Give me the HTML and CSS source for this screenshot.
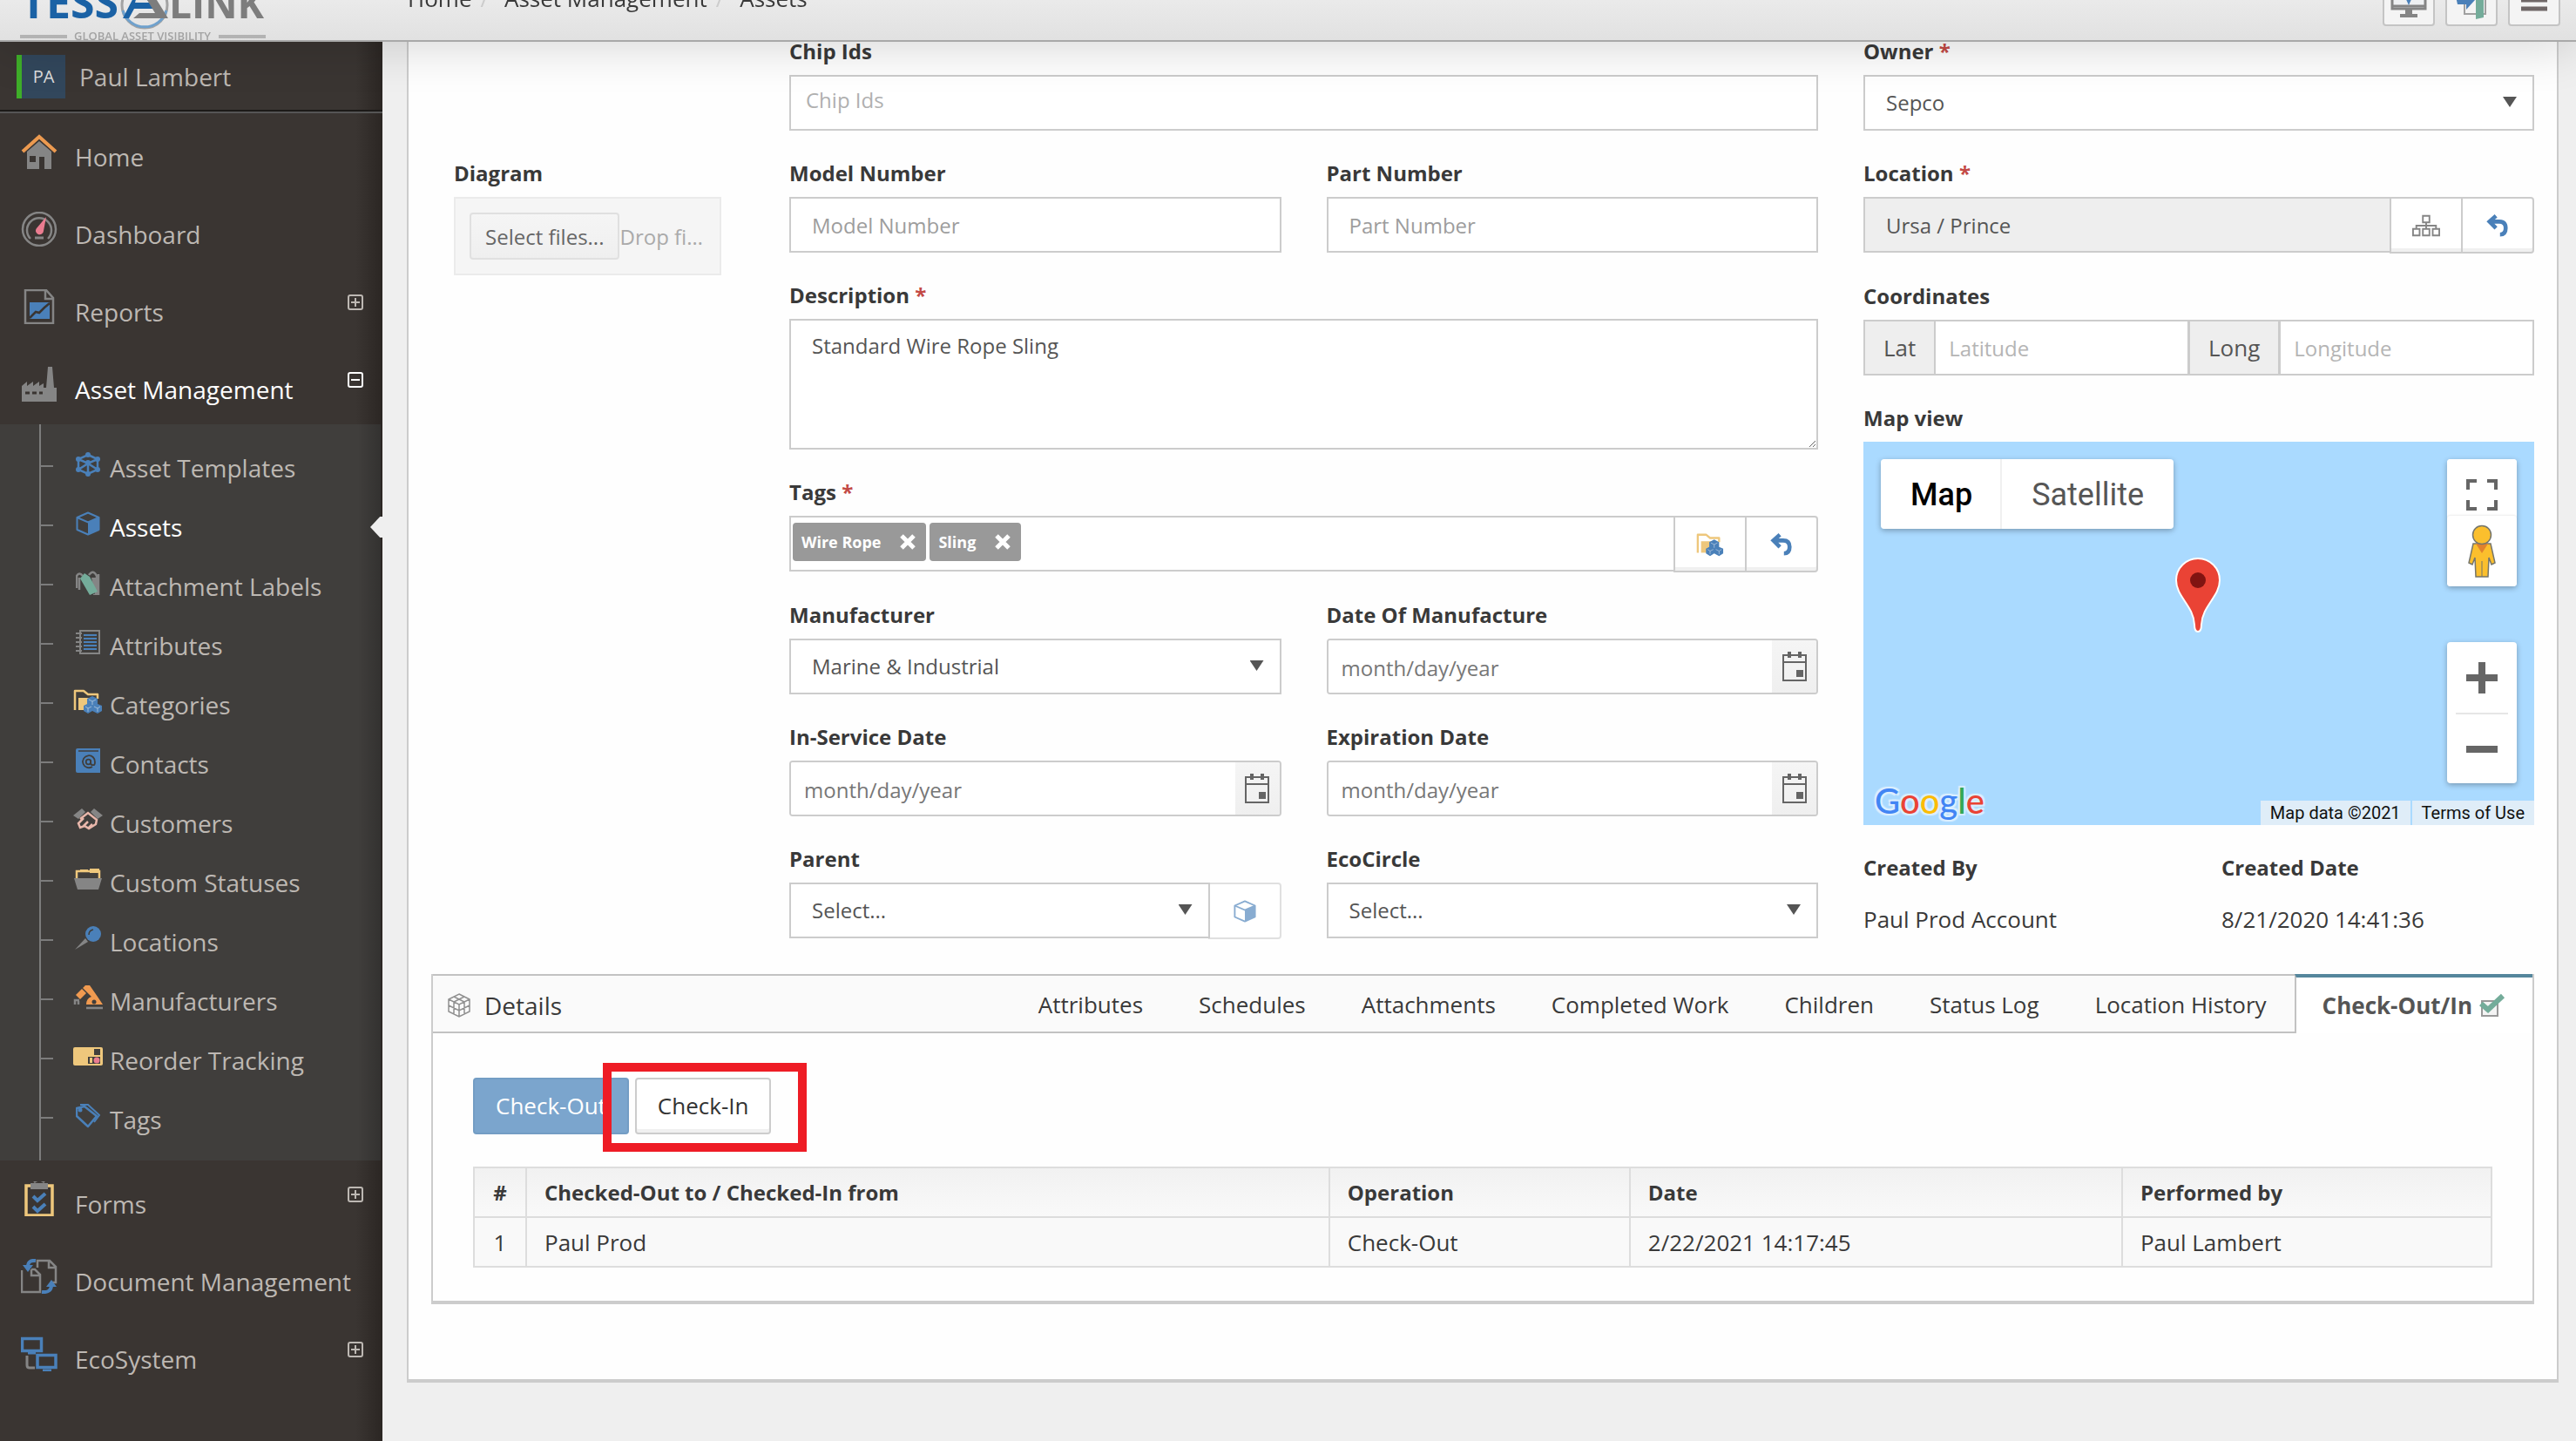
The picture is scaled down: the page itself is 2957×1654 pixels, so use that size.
FILE: index.html
```html
<!DOCTYPE html>
<html lang="en">
<head>
    <meta charset="UTF-8">
    <meta name="viewport" content="width=device-width, initial-scale=1.0">
    <title>Assets</title>
    <link rel="stylesheet" href="styles.css">
</head>
<body>

<!-- shared icons -->
<svg class="sprite" aria-hidden="true">
    <symbol id="i-cube" viewBox="0 0 28 28">
        <path d="M14 1.500 26.500 7v14L14 26.500 1.500 21V7z" fill="none" stroke="currentColor" stroke-width="2" stroke-linejoin="round"/>
        <path d="M1.500 7 14 12.500 26.500 7" fill="none" stroke="currentColor" stroke-width="2"/>
        <path d="M14 12.500 26.500 7v14L14 26.500z" fill="currentColor"/>
    </symbol>
    <symbol id="i-undo" viewBox="0 0 28 28">
        <path d="M12 2 4 9l8 8M5 9h11q8 0 8 8 0 8-7 8" fill="none" stroke="#4a80b9" stroke-width="5"/>
    </symbol>
    <symbol id="i-calendar" viewBox="0 0 28 34">
        <path d="M1 4h26v29H1zM1 12h26" fill="none" stroke="#656565" stroke-width="2"/>
        <path d="M6 0h4v7H6zM18 0h4v7h-4zM16 21h8v8h-8z" fill="#656565"/>
    </symbol>
    <symbol id="i-folder" viewBox="0 0 34 28">
        <path d="M2 24V2h10l5 4h11v5" fill="none" stroke="#eec77c" stroke-width="2.500" stroke-linejoin="round"/>
        <path d="M6 10h17v14H6z" fill="#eec77c"/>
        <path d="m22 8 6 3v6l5 2v6l-5 3-6-3-5 3-5-3v-6l4-2v-6z" fill="#4a80b9"/>
        <path d="m18 12 4 2 4-2M22 14v4M14 20l3 2 4-2M17 22v4M24 20l4 2 3-2M28 22v4" fill="none" stroke="#c3d5e6" stroke-opacity=".7"/>
    </symbol>
    <symbol id="i-plus" viewBox="0 0 18 18">
        <rect x="1" y="1" width="16" height="16" rx="2" fill="none" stroke="currentColor" stroke-width="2"/>
        <path d="M4 9h10M9 4v10" stroke="currentColor" stroke-width="2"/>
    </symbol>
    <symbol id="i-minus" viewBox="0 0 18 18">
        <rect x="1" y="1" width="16" height="16" rx="2" fill="none" stroke="currentColor" stroke-width="2"/>
        <path d="M4 9h10" stroke="currentColor" stroke-width="2"/>
    </symbol>
    <symbol id="i-x" viewBox="0 0 18 18">
        <path d="m2 2 14 14M16 2 2 16" stroke="#fff" stroke-width="5"/>
    </symbol>
</svg>

<header class="header">
    <a href="#" class="logo" aria-label="TessaLink">
        <svg width="290" height="62" viewBox="0 -16 290 62">
            <g font-family="Open Sans, sans-serif" font-weight="700">
                <text x="1" y="21" font-size="50" fill="#1b62a5">TESS</text>
                <text x="171" y="21" font-size="46" fill="#7d7d7d">LINK</text>
            </g>
            <circle cx="143" cy="6" r="26" fill="none" stroke="#a3a3a3" stroke-width="3"/>
            <path d="M118 12a26 26 0 0 0 50 0" fill="none" stroke="#6fa1cd" stroke-width="3"/>
            <path d="M118 21 136-14h12l5 24h-22l-6 11z" fill="#1b62a5"/>
            <path d="M134-4h8l7 7h-17z" fill="#e6e6e6"/>
            <path d="M130 21h40L147-16l-7 6 15 25h-18z" fill="#7d7d7d"/>
            <path d="M0 42h54M228 42h54" stroke="#b3b3b3" stroke-width="4"/>
            <text x="62" y="46" font-family="Open Sans, sans-serif" font-size="13" font-weight="600" fill="#a3a3a3">GLOBAL ASSET VISIBILITY</text>
        </svg>
    </a>
    <nav class="breadcrumb">
        <a href="#">Home</a><span>/</span><a href="#">Asset Management</a><span>/</span><a href="#">Assets</a>
    </nav>
    <div class="header-buttons">
        <button type="button" aria-label="Screen">
            <svg width="44" height="44" viewBox="0 0 44 44"><path d="M3 4h38v28H3z" fill="#eef0f2" stroke="#858585" stroke-width="3"/><path d="M3 29h38" stroke="#858585" stroke-width="3"/><path d="M18 19h8l-4 9z" fill="#4a80b9"/><path d="M18 32h8v6h6v4H12v-4h6z" fill="#858585"/></svg>
        </button>
        <button type="button" aria-label="Sign out">
            <svg width="44" height="44" viewBox="0 0 44 44"><path d="M14 26v12h24V6H14" fill="none" stroke="#a0a0a0" stroke-width="2"/><path d="M27 12l9-4v34l-9 2z" fill="#74ac9a"/><path d="M4 18h10v-7l12 11-10 11v-6H6z" fill="#4a80b9"/></svg>
        </button>
        <button type="button" aria-label="Menu">
            <svg width="30" height="28" viewBox="0 0 30 28"><path d="M0 4h30M0 14h30M0 24h30" stroke="#6f6767" stroke-width="5"/></svg>
        </button>
    </div>
</header>

<div class="layout">
    <aside class="sidebar">
        <div class="user">
            <span class="avatar">PA</span>
            <span>Paul Lambert</span>
        </div>
        <ul class="menu">
            <li><a href="#">
                <svg viewBox="0 0 42 40"><path d="M7 20 21 8l14 12v20h-8V26h-6v14H7z" fill="#858585"/><path d="M10 25h7v7h-7z" fill="#3a3532"/><path d="M2 20 21 3l19 17" fill="none" stroke="#ec9a50" stroke-width="4"/></svg>
                <span>Home</span></a></li>
            <li><a href="#">
                <svg viewBox="0 0 42 40"><circle cx="21" cy="20" r="19" fill="none" stroke="#858585" stroke-width="2.500"/><path d="M11 31a14 14 0 1 1 20 0" fill="none" stroke="#858585" stroke-width="2.500"/><path d="m29 6-3 16a4.500 4.500 0 1 1-8-3z" fill="#ea7c90"/><path d="M16 30h10" stroke="#858585" stroke-width="3"/></svg>
                <span>Dashboard</span></a></li>
            <li><a href="#">
                <svg viewBox="0 0 42 40"><path d="M5 1h24l8 9v29H5z" fill="none" stroke="#858585" stroke-width="2.500"/><path d="M28 1v10h9" fill="none" stroke="#858585" stroke-width="2.500"/><path d="M10 15h23v19H10z" fill="#4a80b9"/><path d="m10 33 7-7 4 1 6-6 6-5" fill="none" stroke="#3a3532" stroke-width="2.500"/></svg>
                <span>Reports</span>
                <svg class="toggle"><use href="#i-plus"/></svg></a></li>
            <li class="open"><a href="#">
                <svg viewBox="0 0 42 40"><path d="M1 40V22l6-5v5l7-5v5l7-5v5l5-3v5h3l2-24h5l2 24h3v16z" fill="#858585"/><path d="M5 30h5M13 30h5M21 30h4" stroke="#3a3532" stroke-width="3"/></svg>
                <span>Asset Management</span>
                <svg class="toggle"><use href="#i-minus"/></svg></a>
                <ul class="submenu">
                    <li><a href="#"><svg viewBox="0 0 28 28"><g stroke="#4a80b9" stroke-width="2.500" fill="none"><path d="M14 3 25 8v12l-11 5L3 20V8zM3 8l11 5 11-5M14 13v12M3 20l11-7 11 7"/></g><g fill="#4a80b9"><circle cx="14" cy="3" r="3"/><circle cx="25" cy="8" r="3"/><circle cx="25" cy="20" r="3"/><circle cx="14" cy="25" r="3"/><circle cx="3" cy="20" r="3"/><circle cx="3" cy="8" r="3"/><circle cx="14" cy="12" r="3"/></g></svg>Asset Templates</a></li>
                    <li class="active"><a href="#"><svg class="blue"><use href="#i-cube"/></svg>Assets</a></li>
                    <li><a href="#"><svg viewBox="0 0 28 28"><path d="M1 20V6q3-5 7 0M4 22V8M15 5q5-7 9 1v4M26 4v24h-6" fill="none" stroke="#858585" stroke-width="2.500"/><path d="M18 8h9v19h-5z" fill="#858585"/><path d="m5 9 5-6 6 4 9 17-9 4z" fill="#74ac9a"/></svg>Attachment Labels</a></li>
                    <li><a href="#"><svg viewBox="0 0 28 28"><path d="M5 1h22v26H5z" fill="none" stroke="#858585" stroke-width="2"/><path d="M0 4h7M0 9h7M0 14h7M0 19h7M0 24h7" stroke="#858585" stroke-width="2"/><path d="M9 6h15M9 10h15M9 14h15M9 18h15M9 22h15" stroke="#4a80b9" stroke-width="2"/></svg>Attributes</a></li>
                    <li><a href="#"><svg class="wide"><use href="#i-folder"/></svg>Categories</a></li>
                    <li><a href="#"><svg viewBox="0 0 28 28"><path d="M2 0h26v28H2q-2 0-2-2V2q0-2 2-2z" fill="#4a80b9"/><path d="M3 3h23" stroke="#403e3c" stroke-width="1.500"/><path d="M19 21a7 7 0 1 1 3-5q0 4-3 3-2 0-2-3v-3" fill="none" stroke="#403e3c" stroke-width="1.800"/><circle cx="14.500" cy="15.500" r="2.800" fill="none" stroke="#403e3c" stroke-width="1.800"/></svg>Contacts</a></li>
                    <li><a href="#"><svg class="wide" viewBox="0 0 34 28"><path d="m0 9 10-8 4 4-8 8zM34 9 24 1l-4 4 8 8z" fill="#858585"/><path d="m8 13 9-7 10 8-1 5-8 5-5-3-5 2-2-5 6-6M12 21l5-5M17 24l5-5" fill="none" stroke="#e9b7ab" stroke-width="2.500"/></svg>Customers</a></li>
                    <li><a href="#"><svg class="wide" viewBox="0 0 34 28"><path d="M4 13V5h26v8" fill="none" stroke="#eec77c" stroke-width="2.500"/><path d="M8 3h9v3H8zM19 2h11v5H19z" fill="#eec77c"/><path d="M1 13h32l-4 13H5z" fill="#858585"/></svg>Custom Statuses</a></li>
                    <li><a href="#"><svg class="wide" viewBox="0 0 34 28"><path d="m2 27 12-13 3 4z" fill="#858585"/><circle cx="23" cy="9" r="9" fill="#4a80b9"/><path d="M18 10q0-5 5-6" fill="none" stroke="#403e3c" stroke-width="1.500"/></svg>Locations</a></li>
                    <li><a href="#"><svg class="wide" viewBox="0 0 34 28"><path d="m3 11 7-7 5 5-7 7z" fill="#f09a50"/><path d="m11 3 3-3h5l9 13 6 9H15q0-7 6-9z" fill="#f09a50"/><circle cx="24" cy="19" r="2.500" fill="#403e3c"/><path d="M15 26h19" stroke="#858585" stroke-width="2.500"/><path d="M7 17H2v5M6 18v4" fill="none" stroke="#858585" stroke-width="2.500"/></svg>Manufacturers</a></li>
                    <li><a href="#"><svg class="wide" viewBox="0 0 34 28"><rect y="3" width="34" height="21" rx="2" fill="#eec77c"/><path d="M24 5h7v7h-7zM17 14h14v8H17z" fill="#403e3c"/><circle cx="27" cy="18" r="3.500" fill="#ea7c90"/><path d="M19 15h3v6h-3z" fill="#eec77c"/></svg>Reorder Tracking</a></li>
                    <li><a href="#"><svg viewBox="0 0 28 28"><path d="M1 14V5l9-2 14 11-10 12z" fill="none" stroke="#4a80b9" stroke-width="2.500" stroke-linejoin="round"/><path d="M5 1h9l13 12-6 8" fill="none" stroke="#4a80b9" stroke-width="2"/><circle cx="5" cy="7" r="2.500" fill="#4a80b9"/></svg>Tags</a></li>
                </ul>
            </li>
            <li><a href="#">
                <svg viewBox="0 0 42 40"><path d="M6 5h30v34H6z" fill="none" stroke="#eec77c" stroke-width="3.500"/><path d="M11 2h20v7H11z" fill="#858585"/><path d="M15 1q6-5 12 0" fill="none" stroke="#858585" stroke-width="2.500"/><path d="m14 17 5 5 9-8M14 29l5 5 9-8" fill="none" stroke="#4a80b9" stroke-width="4"/></svg>
                <span>Forms</span>
                <svg class="toggle"><use href="#i-plus"/></svg></a></li>
            <li><a href="#">
                <svg viewBox="0 0 42 40"><path d="M1 13v25h21V18l-6-6h-4M12 12v7h9M19 10V2h14l7 7v18h-6M32 2v8h8" fill="none" stroke="#858585" stroke-width="2.500"/><path d="M17 2q-9-1-9 7M24 38q11 1 11-8" fill="none" stroke="#4a80b9" stroke-width="4"/><path d="M2 7h12l-6 8zM29 32h12l-6-8z" fill="#4a80b9"/></svg>
                <span>Document Management</span></a></li>
            <li><a href="#">
                <svg viewBox="0 0 42 40"><path d="M1.500 2.500h22v14h-22zM19 21.500h21v14H19z" fill="none" stroke="#4a80b9" stroke-width="3.500"/><path d="M8 19h9M25 39h10" stroke="#4a80b9" stroke-width="3"/><path d="M7 22v11q0 3 3 3h6" fill="none" stroke="#858585" stroke-width="3"/></svg>
                <span>EcoSystem</span>
                <svg class="toggle"><use href="#i-plus"/></svg></a></li>
        </ul>
    </aside>

    <main class="main">
        <div class="panel">
            <form class="asset-form">
                <div class="col-diagram">
                    <div class="field">
                        <label for="diagram">Diagram</label>
                        <div class="upload">
                            <button type="button" id="diagram">Select files...</button>
                            <span>Drop files here to upload</span>
                        </div>
                    </div>
                </div>

                <div class="col-fields">
                    <div class="field full">
                        <label for="chips">Chip Ids</label>
                        <input type="text" id="chips" class="control chip-input" placeholder="Chip Ids">
                    </div>
                    <div class="field">
                        <label for="model">Model Number</label>
                        <input type="text" id="model" class="control" placeholder="Model Number">
                    </div>
                    <div class="field">
                        <label for="part">Part Number</label>
                        <input type="text" id="part" class="control" placeholder="Part Number">
                    </div>
                    <div class="field full">
                        <label for="description">Description <em>*</em></label>
                        <textarea id="description" class="control">Standard Wire Rope Sling</textarea>
                    </div>
                    <div class="field full">
                        <label for="tags">Tags <em>*</em></label>
                        <div class="group">
                            <div class="control tag-box">
                                <span class="tag">Wire Rope <button type="button" aria-label="Remove Wire Rope"><svg><use href="#i-x"/></svg></button></span>
                                <span class="tag">Sling <button type="button" aria-label="Remove Sling"><svg><use href="#i-x"/></svg></button></span>
                                <input type="text" id="tags">
                            </div>
                            <button type="button" class="addon" aria-label="Choose tags"><svg class="wide"><use href="#i-folder"/></svg></button>
                            <button type="button" class="addon last" aria-label="Undo"><svg><use href="#i-undo"/></svg></button>
                        </div>
                    </div>
                    <div class="field">
                        <label for="manufacturer">Manufacturer</label>
                        <div class="select"><select id="manufacturer" class="control"><option>Marine &amp; Industrial</option></select></div>
                    </div>
                    <div class="field">
                        <label for="made">Date Of Manufacture</label>
                        <div class="date">
                            <input type="text" id="made" placeholder="month/day/year">
                            <button type="button" aria-label="Open calendar"><svg><use href="#i-calendar"/></svg></button>
                        </div>
                    </div>
                    <div class="field">
                        <label for="service">In-Service Date</label>
                        <div class="date">
                            <input type="text" id="service" placeholder="month/day/year">
                            <button type="button" aria-label="Open calendar"><svg><use href="#i-calendar"/></svg></button>
                        </div>
                    </div>
                    <div class="field">
                        <label for="expiration">Expiration Date</label>
                        <div class="date">
                            <input type="text" id="expiration" placeholder="month/day/year">
                            <button type="button" aria-label="Open calendar"><svg><use href="#i-calendar"/></svg></button>
                        </div>
                    </div>
                    <div class="field">
                        <label for="parent">Parent</label>
                        <div class="group">
                            <div class="select"><select id="parent" class="control"><option>Select...</option></select></div>
                            <button type="button" class="addon last" disabled aria-label="Open parent"><svg class="blue"><use href="#i-cube"/></svg></button>
                        </div>
                    </div>
                    <div class="field">
                        <label for="circle">EcoCircle</label>
                        <div class="select"><select id="circle" class="control"><option>Select...</option></select></div>
                    </div>
                </div>

                <div class="col-side">
                    <div class="field full">
                        <label for="owner">Owner <em>*</em></label>
                        <div class="select"><select id="owner" class="control"><option>Sepco</option></select></div>
                    </div>
                    <div class="field full">
                        <label for="location">Location <em>*</em></label>
                        <div class="group">
                            <input type="text" id="location" class="control" value="Ursa / Prince" readonly>
                            <button type="button" class="addon" aria-label="Choose location">
                                <svg class="wide" viewBox="0 0 34 26"><g fill="none" stroke="#858585" stroke-width="2"><path d="M13 1h8v8h-8zM1 17h8v8H1zM13 17h8v8h-8zM25 17h8v8h-8zM17 9v8M5 17v-4h24v4"/></g></svg>
                            </button>
                            <button type="button" class="addon last" aria-label="Undo"><svg><use href="#i-undo"/></svg></button>
                        </div>
                    </div>
                    <div class="field full">
                        <label for="lat">Coordinates</label>
                        <div class="group coords">
                            <label for="lat">Lat</label><input type="text" id="lat" placeholder="Latitude">
                            <label for="long">Long</label><input type="text" id="long" placeholder="Longitude">
                        </div>
                    </div>
                    <div class="field full">
                        <h4>Map view</h4>
                        <div class="map">
                            <div class="map-type">
                                <button type="button" class="on">Map</button><button type="button">Satellite</button>
                            </div>
                            <svg class="pin" width="54" height="88" viewBox="0 0 54 88"><path d="M27 86q-4 0-4-8C22 56 2 46 2 27a25 25 0 0 1 50 0c0 19-20 29-21 51q0 8-4 8z" fill="#ea4335" stroke="#fff" stroke-width="2"/><circle cx="27" cy="27" r="9" fill="#811411"/></svg>
                            <div class="map-tools">
                                <button type="button" aria-label="Full screen"><svg width="36" height="36" viewBox="0 0 36 36"><path d="M12 2H2v10M24 2h10v10M2 24v10h10M34 24v10H24" fill="none" stroke="#666" stroke-width="4"/></svg></button>
                                <button type="button" class="pegman" aria-label="Street view"><svg width="36" height="62" viewBox="0 0 36 62"><path d="M8 22h20l5 22-4 2-3-8-1 22H11l-1-22-3 8-4-2z" fill="#fbbf2d" stroke="#75756b" stroke-width="1.500"/><path d="M18 42v18" stroke="#75756b"/><path d="M11 22h14l-7 11z" fill="#e1822c"/><circle cx="18" cy="12" r="10.500" fill="#fbbf2d" stroke="#75756b" stroke-width="1.500"/></svg></button>
                            </div>
                            <div class="map-zoom">
                                <button type="button" aria-label="Zoom in"><svg width="36" height="36" viewBox="0 0 36 36"><path d="M0 18h36M18 0v36" stroke="#666" stroke-width="8"/></svg></button>
                                <button type="button" aria-label="Zoom out"><svg width="36" height="36" viewBox="0 0 36 36"><path d="M0 18h36" stroke="#666" stroke-width="8"/></svg></button>
                            </div>
                            <a href="#" class="google"><span class="b">G</span><span class="r">o</span><span class="y">o</span><span class="b">g</span><span class="g">l</span><span class="r">e</span></a>
                            <div class="map-credit"><span>Map data ©2021</span><a href="#">Terms of Use</a></div>
                        </div>
                    </div>
                    <div class="field">
                        <h4>Created By</h4>
                        <p>Paul Prod Account</p>
                    </div>
                    <div class="field">
                        <h4>Created Date</h4>
                        <p>8/21/2020 14:41:36</p>
                    </div>
                </div>
            </form>

            <section class="details">
                <div class="details-head">
                    <h3>
                        <svg width="26" height="28" viewBox="0 0 26 28"><g fill="none" stroke="#909090" stroke-width="1.500"><path d="m13 1 12 6v14l-12 6-12-6V7zM1 7l12 6 12-6M13 13v14M7 4l12 6v14M19 4 7 10v14M1 14l12 6 12-6"/></g></svg>
                        Details
                    </h3>
                    <nav class="tabs">
                        <a href="#">Attributes</a>
                        <a href="#">Schedules</a>
                        <a href="#">Attachments</a>
                        <a href="#">Completed Work</a>
                        <a href="#">Children</a>
                        <a href="#">Status Log</a>
                        <a href="#">Location History</a>
                        <a href="#" class="active">Check-Out/In
                            <svg width="30" height="28" viewBox="0 0 30 28"><path d="M3 9h18v17H3z" fill="#f4f4f4" stroke="#999" stroke-width="2"/><path d="m2 12 8 7L27 3" fill="none" stroke="#74ac9a" stroke-width="6"/></svg>
                        </a>
                    </nav>
                </div>
                <div class="details-body">
                    <div class="actions">
                        <button type="button" class="btn btn-primary">Check-Out</button>
                        <div class="highlight"><button type="button" class="btn">Check-In</button></div>
                    </div>
                    <table class="log">
                        <thead>
                            <tr>
                                <th class="num">#</th>
                                <th class="who">Checked-Out to / Checked-In from</th>
                                <th class="op">Operation</th>
                                <th class="when">Date</th>
                                <th>Performed by</th>
                            </tr>
                        </thead>
                        <tbody>
                            <tr>
                                <td class="num">1</td>
                                <td>Paul Prod</td>
                                <td>Check-Out</td>
                                <td>2/22/2021 14:17:45</td>
                                <td>Paul Lambert</td>
                            </tr>
                        </tbody>
                    </table>
                </div>
            </section>
        </div>
    </main>
</div>

</body>
</html>
```

FILE: styles.css
```css
* {
    box-sizing: border-box;
}
body {
    margin: 0;
    font-family: "Open Sans", sans-serif;
    font-size: 26px;
    color: #393939;
    background: #efefef;
}
a {
    color: inherit;
    text-decoration: none;
}
button, input, select, textarea {
    font-family: inherit;
    font-size: 24px;
    color: inherit;
    margin: 0;
}
button {
    cursor: pointer;
    padding: 0;
}
ul {
    list-style: none;
    margin: 0;
    padding: 0;
}
.sprite {
    display: none;
}
.blue {
    color: #4a80b9;
}

/* header */
.header {
    position: fixed;
    top: 0;
    left: 0;
    right: 0;
    z-index: 10;
    height: 48px;
    display: flex;
    align-items: flex-end;
    overflow: hidden;
    background: linear-gradient(#eaeaea, #e1e1e1);
    border-bottom: 2px solid #a9a9a9;
    box-shadow: 0 0 60px rgba(0, 0, 0, 0.2);
}
.logo {
    width: 446px;
    padding-left: 23px;
}
.logo svg {
    display: block;
}
.breadcrumb {
    flex: 1;
    padding-left: 22px;
    line-height: 36px;
    margin-bottom: 30px;
}
.breadcrumb span {
    color: #ccc;
    padding: 0 18px 0 10px;
}
.header-buttons {
    display: flex;
    gap: 12px;
    padding-right: 18px;
    margin-bottom: 16px;
}
.header-buttons button {
    width: 60px;
    height: 60px;
    display: flex;
    align-items: center;
    justify-content: center;
    background: #f4f4f4;
    border: 2px solid #c4c4c4;
    border-radius: 4px;
}

.layout {
    display: flex;
    min-height: 100vh;
}

/* sidebar */
.sidebar {
    width: 439px;
    flex-shrink: 0;
    padding-top: 48px;
    background: linear-gradient(to right, transparent 93%, #2b2623), #3a3532;
    color: #bdb8b3;
    font-size: 28px;
}
.user {
    display: flex;
    align-items: center;
    gap: 16px;
    height: 82px;
    padding: 0 20px 0 19px;
    border-bottom: 2px solid #555;
    box-shadow: inset 0 -2px #1c1a18;
}
.avatar {
    width: 56px;
    height: 50px;
    border-left: 6px solid #3fae29;
    background: #32475c;
    color: #ddd;
    font-size: 20px;
    line-height: 50px;
    text-align: center;
}
.menu > li > a {
    display: flex;
    gap: 20px;
    padding: 24px 22px 13px 24px;
    line-height: 52px;
}
.menu > li > a svg {
    width: 42px;
    height: 40px;
    flex-shrink: 0;
}
.menu > li > a span {
    flex: 1;
    white-space: nowrap;
}
.menu > li > a .toggle {
    width: 18px;
    height: 18px;
    margin-top: 6px;
}
.menu > .open > a {
    color: #fff;
    padding-bottom: 14px;
}
.submenu {
    position: relative;
    margin-right: 2px;
    padding: 16px 0 13px;
    background: linear-gradient(to right, transparent 94%, rgba(0, 0, 0, 0.2)), #403e3c;
}
.submenu::before {
    content: "";
    position: absolute;
    top: 0;
    bottom: 0;
    left: 45px;
    width: 2px;
    background: #7c7c7c;
}
.submenu li {
    position: relative;
}
.submenu li::before {
    content: "";
    position: absolute;
    left: 47px;
    top: 31px;
    width: 14px;
    height: 2px;
    background: #7c7c7c;
}
.submenu a {
    display: flex;
    align-items: center;
    gap: 11px;
    height: 68px;
    padding-left: 87px;
}
.submenu svg {
    width: 28px;
    height: 28px;
    margin-bottom: 8px;
}
.submenu svg.wide {
    width: 34px;
    margin-left: -3px;
    margin-right: -3px;
}
.submenu .active a {
    color: #fff;
}
.submenu .active::after {
    content: "";
    position: absolute;
    right: -2px;
    top: 22px;
    width: 14px;
    height: 24px;
    background: #efefef;
    clip-path: polygon(0 50%, 80% 0, 100% 0, 100% 100%, 80% 100%);
}

/* main panel */
.main {
    flex: 1;
    min-width: 0;
    padding: 0 20px 68px 28px;
}
.panel {
    padding: 46px 26px 86px;
    background: #fefefe;
    border: 2px solid #ccc;
    border-width: 0 2px 4px;
}
.asset-form {
    display: grid;
    grid-template-columns: 333fr 1181fr 770fr;
    gap: 52px;
    padding-left: 26px;
}
.col-diagram {
    padding-top: 140px;
    padding-right: 26px;
    min-width: 0;
}
.col-fields, .col-side {
    display: grid;
    grid-template-columns: 1fr 1fr;
    align-content: start;
    gap: 36px 52px;
    min-width: 0;
}
.field {
    min-width: 0;
}
.full {
    grid-column: span 2;
}
.field > label, .field > h4 {
    display: block;
    margin: 0 0 14px;
    font-size: 24px;
    font-weight: 700;
    line-height: 26px;
    color: #393939;
}
.field em {
    color: #c34a46;
    font-style: normal;
}
.field p {
    margin: 0;
    line-height: 64px;
}
.control {
    display: block;
    width: 100%;
    height: 64px;
    padding: 0 24px;
    border: 2px solid #ccc;
    border-radius: 0;
    background: #fff;
    color: #555;
}
.control[readonly] {
    background: #eee;
}
::placeholder {
    color: #9d9d9d;
    opacity: 1;
}
.chip-input {
    padding: 0 17px 8px;
}
.chip-input::placeholder {
    color: #b0b0b0;
}
textarea.control {
    height: 150px;
    padding-top: 11px;
    line-height: 36px;
    resize: vertical;
}
.select {
    position: relative;
    flex: 1;
}
.select select {
    appearance: none;
    padding-bottom: 2px;
}
.select::after {
    content: "";
    position: absolute;
    right: 20px;
    top: 25px;
    width: 16px;
    height: 12px;
    background: #555;
    clip-path: polygon(0 0, 100% 0, 50% 100%);
    pointer-events: none;
}
.group {
    display: flex;
    align-items: flex-start;
}
.addon {
    width: 84px;
    height: 65px;
    flex-shrink: 0;
    margin-left: -2px;
    display: flex;
    align-items: center;
    justify-content: center;
    background: #fff;
    border: 2px solid #ccc;
    box-shadow: inset 0 -4px #f0f0f0;
}
.addon.last {
    border-radius: 0 4px 4px 0;
}
.addon svg {
    width: 26px;
    height: 28px;
}
.addon svg.wide {
    width: 32px;
}
.addon:disabled {
    border-color: #e0e0e0;
    border-left-color: #ccc;
    box-shadow: none;
}
.addon:disabled svg {
    opacity: 0.65;
}
.tag-box {
    display: flex;
    gap: 4px;
    padding: 6px 2px;
    flex: 1;
}
.tag-box input {
    flex: 1;
    min-width: 0;
    border: 0;
    background: none;
}
.tag {
    display: flex;
    align-items: center;
    gap: 22px;
    height: 44px;
    padding: 0 12px 0 10px;
    border-radius: 4px;
    background: #999;
    color: #fff;
    font-size: 18px;
    font-weight: 700;
}
.tag button {
    border: 0;
    background: none;
}
.tag svg {
    display: block;
    width: 18px;
    height: 18px;
}
.date {
    display: flex;
    height: 64px;
    border: 2px solid #ccc;
    border-radius: 4px;
    background: #fff;
    overflow: hidden;
}
.date input {
    flex: 1;
    min-width: 0;
    border: 0;
    padding: 2px 15px 0;
}
.date input::placeholder {
    color: #777;
}
.date button {
    display: flex;
    align-items: center;
    justify-content: center;
    width: 51px;
    border: 0;
    background: linear-gradient(#f5f5f5, #efefef);
}
.date svg {
    width: 28px;
    height: 34px;
}
.upload {
    display: flex;
    align-items: center;
    height: 90px;
    padding: 0 16px;
    border: 2px solid #ebebeb;
    background: #f5f5f5;
    font-size: 24px;
    color: #aaa;
}
.upload button {
    height: 54px;
    padding: 0 16px;
    flex-shrink: 0;
    border: 2px solid #e0e0e0;
    border-radius: 4px;
    background: linear-gradient(#f5f5f5, #efefef);
    color: #666;
}
.upload span {
    overflow: hidden;
    white-space: nowrap;
    text-overflow: ellipsis;
}
.coords {
    height: 64px;
    align-items: stretch;
    border: 2px solid #ccc;
    background: #fff;
    color: #555;
}
.coords label {
    padding: 0 21px;
    line-height: 60px;
    background: #eee;
    border-right: 2px solid #ccc;
}
.coords input + label {
    border-left: 3px solid #ccc;
    border-right-width: 3px;
}
.coords input {
    flex: 1;
    min-width: 0;
    border: 0;
    padding: 0 15px;
}
.coords input::placeholder {
    color: #b5b5b5;
}

/* map */
.map {
    position: relative;
    height: 440px;
    background: #aadaff;
    font-family: Roboto, sans-serif;
}
.map button {
    display: flex;
    align-items: center;
    justify-content: center;
    border: 0;
    background: #fff;
}
.map-type {
    position: absolute;
    top: 20px;
    left: 20px;
    display: flex;
    border-radius: 4px;
    overflow: hidden;
    box-shadow: 0 2px 6px rgba(0, 0, 0, 0.3);
}
.map .map-type button {
    height: 80px;
    padding: 2px 34px 0;
    font-size: 36px;
    color: #565656;
}
.map .map-type .on {
    padding-right: 32px;
    color: #000;
    font-weight: 500;
    border-right: 2px solid #f0f0f0;
}
.pin {
    position: absolute;
    left: 50%;
    bottom: 50%;
    margin-left: -28px;
}
.map-tools, .map-zoom {
    position: absolute;
    right: 20px;
    width: 80px;
    display: flex;
    flex-direction: column;
    background: #fff;
    border-radius: 4px;
    box-shadow: 0 2px 6px rgba(0, 0, 0, 0.3);
}
.map-tools {
    top: 20px;
}
.map-zoom {
    bottom: 48px;
    padding: 0 10px;
}
.map-tools button, .map-zoom button {
    height: 81px;
    border-radius: 4px;
}
.map .map-zoom button + button {
    border-top: 2px solid #e6e6e6;
    border-radius: 0;
}
.map-tools .pegman {
    margin-top: -16px;
    box-shadow: 0 -1px 2px rgba(0, 0, 0, 0.08);
}
.google {
    position: absolute;
    left: 13px;
    bottom: 3px;
    font-family: Lato, sans-serif;
    font-size: 40px;
    font-weight: 500;
    line-height: 50px;
    text-shadow: 2px 2px 1px #dcefff, -2px -2px 1px #dcefff, 2px -2px 1px #dcefff, -2px 2px 1px #dcefff;
}
.google .b { color: #4285f4; }
.google .r { color: #ea4335; }
.google .y { color: #fbbc05; }
.google .g { color: #34a853; }
.map-credit {
    position: absolute;
    right: 0;
    bottom: 0;
    display: flex;
    gap: 2px;
    font-size: 20px;
    line-height: 28px;
    color: #111;
}
.map-credit > * {
    padding: 0 11px;
    background: rgba(245, 245, 245, 0.7);
}

/* details */
.details {
    margin-top: 31px;
    border: 2px solid #ccc;
    border-width: 0 2px 4px;
}
.details-head {
    display: flex;
    justify-content: space-between;
    height: 68px;
    background: #fafafa;
    border-top: 2px solid #c2c2c2;
    box-shadow: inset 0 -2px #c2c2c2;
}
.details-head h3 {
    display: flex;
    align-items: center;
    gap: 16px;
    margin: 0;
    padding: 2px 0 0 17px;
    font-size: 28px;
    font-weight: 400;
}
.tabs {
    display: flex;
    white-space: nowrap;
}
.tabs a {
    padding: 0 32px;
    line-height: 66px;
}
.tabs .active {
    display: flex;
    align-items: center;
    gap: 8px;
    margin-top: -2px;
    padding: 0 31px 0 30px;
    border-top: 4px solid #55869c;
    border-left: 2px solid #c2c2c2;
    background: #fff;
    color: #555;
    font-weight: 700;
}
.details-body {
    padding: 51px 46px 38px;
}
.actions {
    display: flex;
    gap: 7px;
    margin-bottom: 37px;
}
.btn {
    height: 65px;
    padding: 0 24px 2px;
    border: 2px solid #ccc;
    border-radius: 4px;
    background: #fff;
    box-shadow: inset 0 -4px #f0f0f0;
    font-size: 26px;
    color: #333;
}
.btn-primary {
    border-color: #739dc4;
    background: #7ba5cd;
    box-shadow: none;
    color: #fff;
}
.highlight {
    position: relative;
}
.highlight::after {
    content: "";
    position: absolute;
    top: -17px;
    right: -41px;
    bottom: -20px;
    left: -37px;
    border: 10px solid #ee1c25;
    pointer-events: none;
}
.log {
    width: 100%;
    table-layout: fixed;
    border-collapse: collapse;
    background: #f9f9f9;
}
.log th, .log td {
    height: 57px;
    padding: 0 20px;
    border: 2px solid #ddd;
    text-align: left;
}
.log th {
    font-size: 24px;
    font-weight: 700;
    background: linear-gradient(#f1f1f1, #f9f9f9);
}
.log th.num, .log td.num {
    width: 60px;
    padding: 0;
    text-align: center;
}
.log .who { width: 39.8%; }
.log .op { width: 14.9%; }
.log .when { width: 24.4%; }
```
